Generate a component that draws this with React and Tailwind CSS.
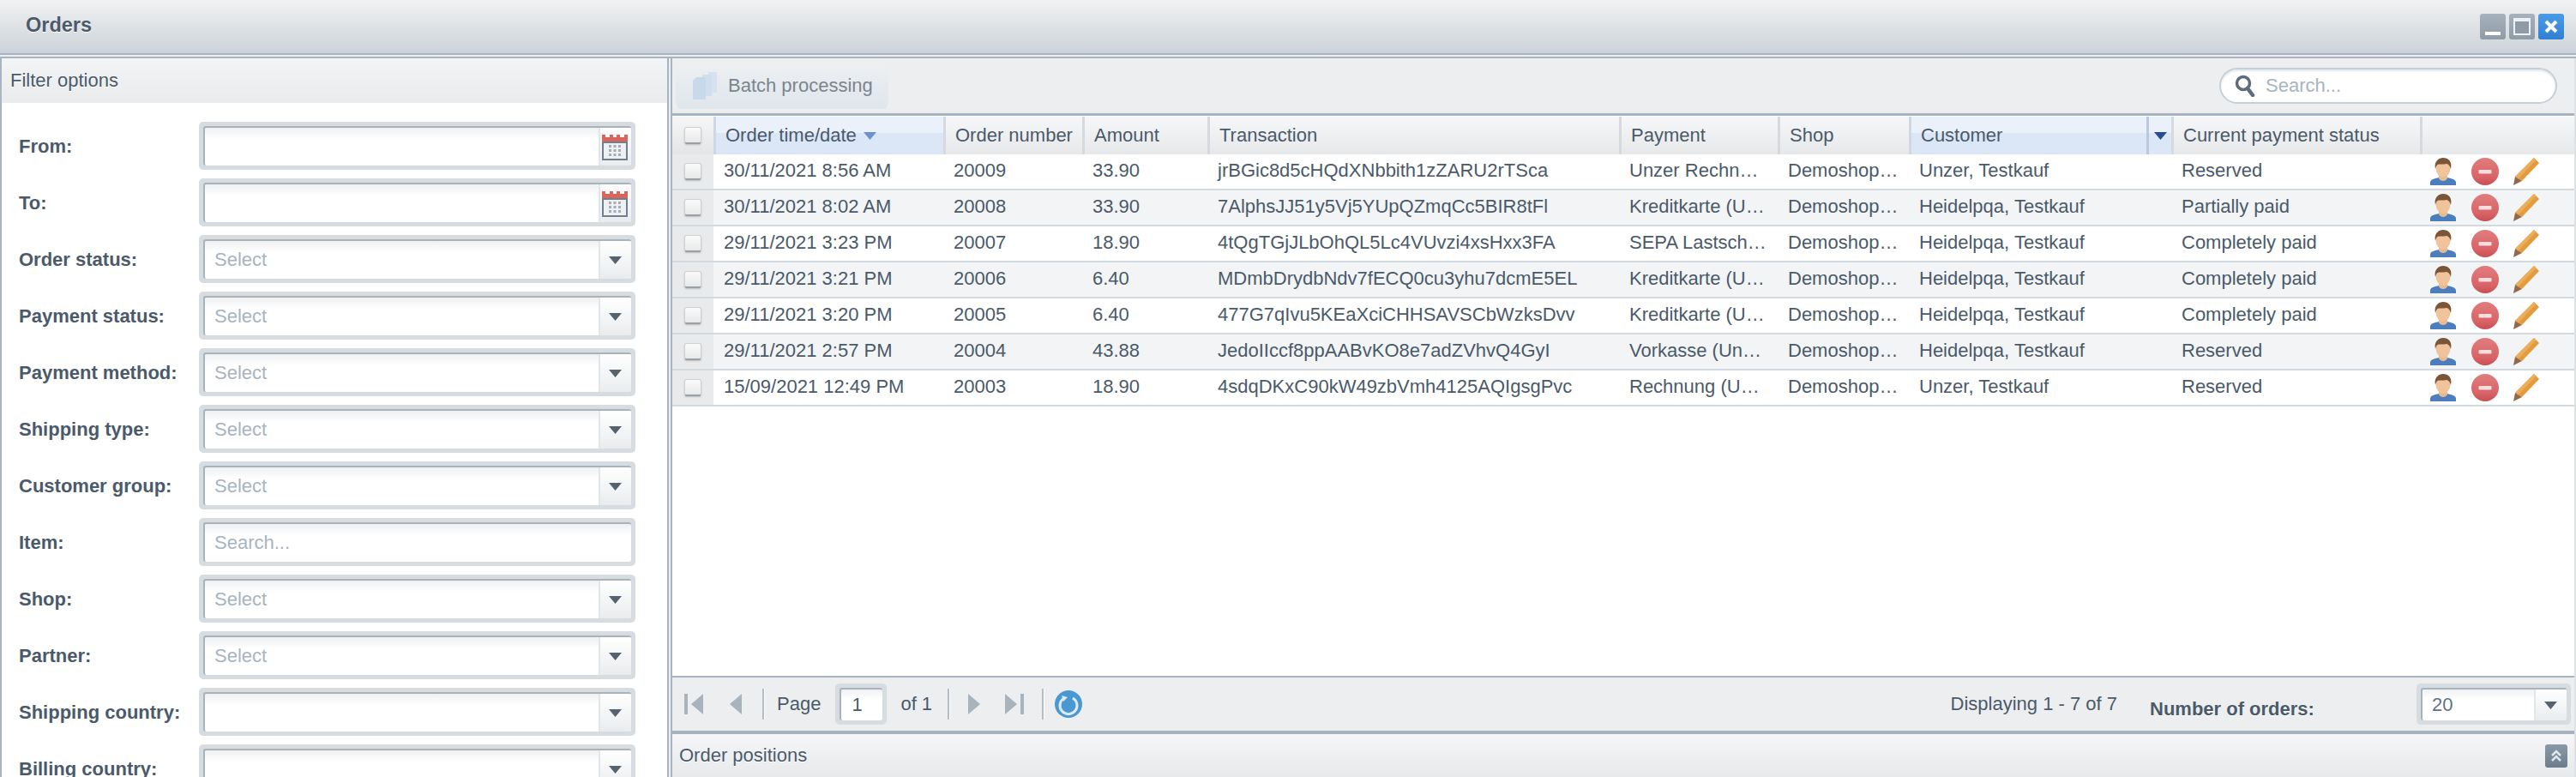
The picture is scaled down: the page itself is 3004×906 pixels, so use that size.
import React from "react";

const Cal = () => (
  <svg width="30" height="31" viewBox="0 0 30 31">
    <path d="M0 1 V10 H30 V1 H26 V4 H21 V1 H17 V4 H13 V1 H9 V4 H4 V1 Z" fill="#d9665a" />
    <rect x="1" y="10" width="28" height="20" fill="#eef0f2" stroke="#71808f" strokeWidth="2" />
    <g fill="#a3aeb9">
      <rect x="8" y="13" width="3" height="3" /><rect x="13.5" y="13" width="3" height="3" /><rect x="19" y="13" width="3" height="3" />
      <rect x="8" y="18" width="3" height="3" /><rect x="13.5" y="18" width="3" height="3" /><rect x="19" y="18" width="3" height="3" />
      <rect x="8" y="23" width="3" height="3" /><rect x="13.5" y="23" width="3" height="3" /><rect x="19" y="23" width="3" height="3" />
    </g>
  </svg>
);

const Caret = ({ color = "#56636f" }) => (
  <svg width="15" height="9" viewBox="0 0 15 9"><path d="M0 0 H15 L7.5 9 Z" fill={color} /></svg>
);

const Field = ({ placeholder, kind, wClass = "w-[509px] h-14" }) => (
  <div className={`${wClass} shrink-0 rounded-[5px] bg-[#d6dce0] p-[5px]`}>
    <div className="flex h-full overflow-hidden rounded-[3px] border-t-2 border-l-2 border-[#a9b3bb] bg-gradient-to-b from-[#eef0f2] from-0% to-white to-30%">
      <div className="flex min-w-0 flex-1 items-center pl-[11px] text-[#a7b4c1]">{placeholder}</div>
      {kind && (
        <div className="flex w-[38px] shrink-0 items-center justify-center border-l-2 border-[#e3e6e9] bg-gradient-to-b from-white to-[#e9ecee] pr-[2px]">
          {kind === "cal" ? <Cal /> : <Caret />}
        </div>
      )}
    </div>
  </div>
);

const filters = [
  ["From:", "", "cal"],
  ["To:", "", "cal"],
  ["Order status:", "Select", "combo"],
  ["Payment status:", "Select", "combo"],
  ["Payment method:", "Select", "combo"],
  ["Shipping type:", "Select", "combo"],
  ["Customer group:", "Select", "combo"],
  ["Item:", "Search...", null],
  ["Shop:", "Select", "combo"],
  ["Partner:", "Select", "combo"],
  ["Shipping country:", "", "combo"],
  ["Billing country:", "", "combo"],
];

const rows = [
  ["30/11/2021 8:56 AM", "20009", "33.90", "jrBGic8d5cHQdXNbbith1zZARU2rTSca", "Unzer Rechn…", "Unzer, Testkauf", "Reserved"],
  ["30/11/2021 8:02 AM", "20008", "33.90", "7AlphsJJ51y5Vj5YUpQZmqCc5BIR8tFl", "Kreditkarte (U…", "Heidelpqa, Testkauf", "Partially paid"],
  ["29/11/2021 3:23 PM", "20007", "18.90", "4tQgTGjJLbOhQL5Lc4VUvzi4xsHxx3FA", "SEPA Lastsch…", "Heidelpqa, Testkauf", "Completely paid"],
  ["29/11/2021 3:21 PM", "20006", "6.40", "MDmbDrydbNdv7fECQ0cu3yhu7dcmE5EL", "Kreditkarte (U…", "Heidelpqa, Testkauf", "Completely paid"],
  ["29/11/2021 3:20 PM", "20005", "6.40", "477G7qIvu5KEaXciCHHSAVSCbWzksDvv", "Kreditkarte (U…", "Heidelpqa, Testkauf", "Completely paid"],
  ["29/11/2021 2:57 PM", "20004", "43.88", "JedoIIccf8ppAABvKO8e7adZVhvQ4GyI", "Vorkasse (Un…", "Heidelpqa, Testkauf", "Reserved"],
  ["15/09/2021 12:49 PM", "20003", "18.90", "4sdqDKxC90kW49zbVmh4125AQIgsgPvc", "Rechnung (U…", "Unzer, Testkauf", "Reserved"],
];

const cols = "grid grid-cols-[48px_268px_162px_146px_480px_185px_153px_306px_290px_1fr]";

const CheckBox = () => (
  <div className="h-5 w-5 rounded-[3px] border border-[#cfd2d5] border-b-2 border-b-[#9a9fa4] bg-gradient-to-b from-[#fafafa] to-[#e8e9ea] shadow-[0_1px_2px_rgba(0,0,0,0.2)]" />
);

const HCell = ({ children, active = false, className = "" }) => (
  <div className={`flex min-w-0 items-center whitespace-nowrap pl-[11px] pr-1 border-l-[3px] ${active ? "border-[#cfd7e2] bg-[linear-gradient(#eaf1fb_0%,#eaf1fb_44%,#dbe6f7_44%,#dbe6f7_100%)]" : "border-[#d6dade]"} ${className}`}>
    {children}
  </div>
);

const UserIcon = () => (
  <svg width="30" height="32" viewBox="0 0 30 32">
    <path d="M0 32 V28 C1 25 6 24 10 23 L20 23 C24 24 29 25 30 28 V32 Z" fill="#4c7dbd" />
    <path d="M10 19 L10 24 C12 28 18 28 20 24 L20 19 Z" fill="#e8bb92" />
    <ellipse cx="15" cy="12" rx="8.5" ry="11" fill="#f0c39b" />
    <path d="M6 13 C4 4 10 0 15 0 C21 0 26 4 24 13 C23 9 21 7.5 19 7 C15 8 10 7 8.5 8 C7 9 6.5 11 6 13 Z" fill="#7a5538" />
  </svg>
);

const MinusIcon = () => (
  <svg width="32" height="32" viewBox="0 0 32 32">
    <defs>
      <linearGradient id="mi" x1="0" y1="0" x2="0" y2="1">
        <stop offset="0" stopColor="#e07d7d" /><stop offset="0.7" stopColor="#d96467" /><stop offset="1" stopColor="#c64f52" />
      </linearGradient>
    </defs>
    <circle cx="16" cy="16" r="16" fill="url(#mi)" />
    <rect x="8.5" y="14" width="15" height="4.5" rx="1" fill="#f6dcdc" />
  </svg>
);

const PencilIcon = () => (
  <svg width="30" height="32" viewBox="0 0 30 32">
    <path d="M24 0 L30 6 L10 27 L2 22 Z" fill="#e39c3d" />
    <path d="M24 0 L26.5 2.5 L6 24 L2 22 Z" fill="#ecae5a" />
    <path d="M2 22 L10 27 L0 32 Z" fill="#94694a" />
  </svg>
);

const Sep = () => <div className="h-9 w-[3px] shrink-0 border-l-2 border-r border-l-[#b4bcc4] border-r-white" />;

const First = ({ flip }) => (
  <svg width="22" height="24" viewBox="0 0 22 24" className={flip ? "rotate-180" : ""}>
    <rect x="0" y="0" width="4" height="24" fill="#a9b3bc" />
    <path d="M22 0 V24 L8 12 Z" fill="#a9b3bc" />
  </svg>
);
const Prev = ({ flip }) => (
  <svg width="14" height="24" viewBox="0 0 14 24" className={flip ? "rotate-180" : ""}>
    <path d="M14 0 V24 L0 12 Z" fill="#a9b3bc" />
  </svg>
);

const Refresh = () => (
  <svg width="32" height="32" viewBox="0 0 32 32">
    <circle cx="16" cy="16" r="16" fill="#4a98d3" />
    <path d="M11 9 A10 10 0 1 0 21 9" fill="none" stroke="#dcebf6" strokeWidth="3" />
    <path d="M8 6 L15 8 L10 13 Z" fill="#dcebf6" />
  </svg>
);

export default function App() {
  return (
    <div className="flex h-[906px] w-[3004px] flex-col overflow-hidden bg-[#eceef0] font-['Liberation_Sans',Arial,sans-serif] text-[22px] leading-[26px] text-[#4a5a6a] antialiased">
      {/* Title bar */}
      <div className="flex h-[64px] shrink-0 items-center justify-between border-b-2 border-[#a8b4bf] bg-gradient-to-b from-[#f1f2f3] to-[#ccd3d8] pr-[14px] pl-[30px]">
        <span className="-mt-1 text-[23.5px] font-bold text-[#4b5b6b] [text-shadow:0_1px_0_#fff]">Orders</span>
        <div className="flex gap-1">
          <div className="flex h-[30px] w-[30px] items-end justify-center rounded-[3px] bg-gradient-to-b from-[#a6b1bc] to-[#8f9ca8] pb-[5px]">
            <div className="h-1 w-[18px] bg-white" />
          </div>
          <div className="flex h-[30px] w-[30px] items-center justify-center rounded-[3px] bg-gradient-to-b from-[#a6b1bc] to-[#8f9ca8]">
            <div className="h-5 w-5 border-2 border-t-4 border-[#eef1f3] bg-[#8f9ca8]" />
          </div>
          <div className="flex h-[30px] w-[30px] items-center justify-center rounded-[3px] bg-gradient-to-b from-[#4a9be6] to-[#2f80d4]">
            <svg width="18" height="18" viewBox="0 0 18 18"><path d="M3 3 L15 15 M15 3 L3 15" stroke="#fff" strokeWidth="4" /></svg>
          </div>
        </div>
      </div>

      <div className="mt-[2px] flex min-h-0 flex-1 border-t-2 border-[#a8b4bf]">
        {/* Filter panel */}
        <div className="mr-[2px] flex w-[780px] shrink-0 flex-col overflow-hidden border-x-2 border-[#a8b4bf] bg-white">
          <div className="flex h-[52px] shrink-0 items-center bg-gradient-to-b from-[#f3f4f5] to-[#e9ebed] pl-[10px] [text-shadow:0_1px_0_#fff]">
            Filter options
          </div>
          <div className="flex flex-col gap-[10px] pt-[22px] pl-[20px]">
            {filters.map(([label, ph, kind]) => (
              <div key={label} className="flex items-center">
                <div className="mt-[1px] w-[210px] shrink-0 font-bold">{label}</div>
                <Field placeholder={ph} kind={kind} />
              </div>
            ))}
          </div>
        </div>

        {/* Orders panel */}
        <div className="flex min-w-0 flex-1 flex-col border-x-2 border-r-[#dfe2e5] border-l-[#a8b4bf]">
          {/* Toolbar */}
          <div className="flex h-[67px] shrink-0 items-center justify-between border-b-[3px] border-[#a8b4bf] pr-[20px] pl-[4px]">
            <div className="flex h-[54px] w-[248px] items-center gap-[13px] rounded-[8px] bg-gradient-to-b from-[#eef0f2] to-[#dfe6ec] pl-[20px] text-[#7c858e]">
              <svg width="28" height="32" viewBox="0 0 28 32">
                <path d="M18 0 H28 V24 H18 Z" fill="#d6e2f0" />
                <path d="M11 3 H22 V28 H11 Z" fill="#d0deee" />
                <path d="M4 6 H15 V32 H0 V10 Z" fill="#c9d9ec" />
              </svg>
              <span>Batch processing</span>
            </div>
            <div className="flex h-[42px] w-[394px] items-center rounded-full border-2 border-[#c6d0d9] bg-white pl-[16px] shadow-[inset_0_2px_2px_rgba(120,135,150,0.2)]">
              <svg width="24" height="26" viewBox="0 0 24 26">
                <circle cx="10" cy="10" r="7.5" fill="#fff" stroke="#5c6c7a" strokeWidth="3.5" />
                <path d="M15 16 L21 24" stroke="#5c6c7a" strokeWidth="4.5" strokeLinecap="round" />
              </svg>
              <span className="ml-[12px] text-[#a7b4c1]">Search...</span>
            </div>
          </div>

          {/* Grid */}
          <div className="flex min-h-0 flex-1 flex-col bg-white">
            <div className={`${cols} mt-[1px] h-[44px] shrink-0 bg-gradient-to-b from-[#f6f7f8] to-[#e6e8ea]`}>
              <div className="flex items-center justify-center bg-gradient-to-b from-[#f6f6f7] to-[#e4e5e6]"><CheckBox /></div>
              <HCell active className="gap-[8px]">
                Order time/date
                <Caret color="#6c94cb" />
              </HCell>
              <HCell>Order number</HCell>
              <HCell>Amount</HCell>
              <HCell>Transaction</HCell>
              <HCell>Payment</HCell>
              <HCell>Shop</HCell>
              <HCell active className="justify-between !pr-0">
                Customer
                <div className="flex h-full w-[29px] items-center justify-center border-l-[3px] border-[#bcc9da]">
                  <Caret color="#2b4c8f" />
                </div>
              </HCell>
              <HCell>Current payment status</HCell>
              <HCell />
            </div>

            <div className="min-h-0 flex-1 overflow-hidden">
              {rows.map((r, i) => (
                <div key={r[1]} className={`${cols} h-[42px] border-b-2 border-[#d2d9df] ${i % 2 ? "bg-[#f2f4f6]" : "bg-white"}`}>
                  <div className="flex items-center justify-center bg-[#e9eaec]"><CheckBox /></div>
                  {[r[0], r[1], r[2], r[3], r[4], "Demoshop…", r[5], r[6]].map((c, j) => (
                    <div key={j} className="flex min-w-0 items-center whitespace-nowrap pb-[2px] pl-[12px]">
                      {c}
                    </div>
                  ))}
                  <div className="flex items-center pl-[12px]">
                    <UserIcon />
                    <div className="ml-[18px]"><MinusIcon /></div>
                    <div className="ml-[17px]"><PencilIcon /></div>
                  </div>
                </div>
              ))}
            </div>
          </div>

          {/* Pager */}
          <div className="flex h-[68px] shrink-0 items-center border-t-2 border-b-4 border-[#a8b4bf] pr-[4px] pl-[14px]">
            <First />
            <div className="ml-[31px]"><Prev /></div>
            <div className="ml-[24px]"><Sep /></div>
            <span className="ml-[14px]">Page</span>
            <div className="ml-[17px] h-12 w-[60px] rounded-[5px] bg-[#d6dce0] p-[5px]">
              <div className="flex h-full items-center rounded-[3px] border-t-2 border-l-2 border-[#a9b3bb] bg-gradient-to-b from-[#eef0f2] from-0% to-white to-30% pl-[12px]">1</div>
            </div>
            <span className="ml-[16px]">of 1</span>
            <div className="ml-[18px]"><Sep /></div>
            <div className="ml-[21px]"><Prev flip /></div>
            <div className="ml-[29px]"><First flip /></div>
            <div className="ml-[21px]"><Sep /></div>
            <div className="ml-[12px]"><Refresh /></div>
            <div className="flex-1" />
            <span>Displaying 1 - 7 of 7</span>
            <span className="mt-[12px] ml-[38px] w-[311px] font-bold [text-shadow:0_1px_0_#fff]">Number of orders:</span>
            <Field placeholder={<span className="text-[#5f7488]">20</span>} kind="combo" wClass="h-12 w-[180px]" />
          </div>

          {/* Order positions */}
          <div className="flex h-[50px] shrink-0 items-center justify-between bg-gradient-to-b from-[#f6f6f7] to-[#e7e9eb] pr-[8px] pl-[8px] [text-shadow:0_1px_0_#fff]">
            Order positions
            <div className="flex h-[27px] w-[26px] items-center justify-center rounded-[3px] bg-gradient-to-b from-[#8a99a7] to-[#6b7c8c]">
              <svg width="14" height="16" viewBox="0 0 14 16" fill="none" stroke="#dfe6ec" strokeWidth="2.5"><path d="M2 8 L7 3 L12 8 M2 14 L7 9 L12 14" /></svg>
            </div>
          </div>
        </div>
      </div>
    </div>
  );
}
